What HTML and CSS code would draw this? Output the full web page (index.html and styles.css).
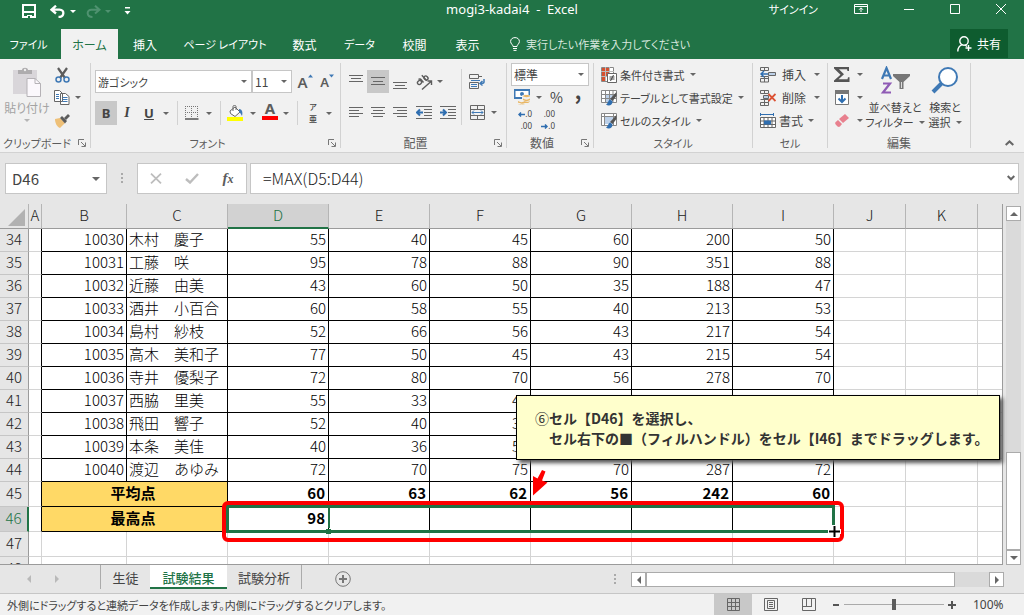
FILE: index.html
```html
<!DOCTYPE html>
<html lang="ja">
<head>
<meta charset="utf-8">
<title>mogi3-kadai4 - Excel</title>
<link rel="stylesheet" href="styles.css">
</head>
<body>
<div class="app">

<header class="titlebar">
  <div class="quick">
    <button class="q-save" aria-label="上書き保存"><svg width="14" height="14" viewBox="0 0 14 14" fill="none" stroke="#fff" stroke-width="2"><path d="M1 1h12v12H1zM1 8h12"/><path d="M5 14v-3h5v3" fill="#fff" stroke="none"/><path d="M6 12h2v2H6z" fill="#217346" stroke="none"/></svg></button>
    <button class="q-undo" aria-label="元に戻す"><svg width="15" height="13" viewBox="0 0 15 13" fill="none" stroke="#fff" stroke-width="2.300"><path d="M6 0.700L1.500 4.700 6 8.500M2 4.700h7.500c5.500 0 5 7.300-1 7.300"/></svg></button>
    <i class="caret white"></i>
    <button class="q-redo" aria-label="やり直し"><svg width="15" height="13" viewBox="0 0 15 13" fill="none" stroke="#4f9270" stroke-width="2"><path d="M9 0.700l4.500 4L9 8.500M13 4.700H5.500C0 4.700.5 12 6.500 12"/></svg></button>
    <i class="caret faded"></i>
    <button class="q-more" aria-label="カスタマイズ"><svg width="7" height="8" viewBox="0 0 7 8" fill="#fff"><path d="M1 0h5v1.500H1zM0.500 4h6l-3 3.500z"/></svg></button>
  </div>
  <h1 class="doc">mogi3-kadai4&nbsp; -&nbsp; Excel</h1>
  <div class="window">
    <button class="signin">サインイン</button>
    <button aria-label="リボンの表示オプション"><svg width="14" height="10" viewBox="0 0 14 10" fill="none" stroke="#fff"><path d="M.5.500h13v9H.5zM.5 2.500h13M7 8V4M5 5.800l2-2 2 2"/></svg></button>
    <button aria-label="最小化"><svg width="10" height="10" viewBox="0 0 10 10" stroke="#fff"><path d="M0 5.500h10"/></svg></button>
    <button aria-label="最大化"><svg width="10" height="10" viewBox="0 0 10 10" fill="none" stroke="#fff"><path d="M.5.500h9v9h-9z"/></svg></button>
    <button aria-label="閉じる"><svg width="10" height="10" viewBox="0 0 10 10" fill="none" stroke="#fff"><path d="M0 0l10 10M10 0L0 10"/></svg></button>
  </div>
</header>

<nav class="tabs">
  <button class="tab file kana">ファイル</button>
  <button class="tab home on">ホーム</button>
  <button class="tab insert">挿入</button>
  <button class="tab page kana">ページ レイアウト</button>
  <button class="tab formula">数式</button>
  <button class="tab data kana">データ</button>
  <button class="tab review">校閲</button>
  <button class="tab view">表示</button>
  <button class="tell kana"><svg width="10" height="14" viewBox="0 0 10 14" fill="none" stroke="#fff"><path d="M3 9.500c0-2-2.400-2.500-2.400-5C.6 2 2.600.6 5 .6s4.400 1.400 4.400 3.900c0 2.500-2.400 3-2.400 5zM3 11.500h4M3.500 13.400h3"/></svg>実行したい作業を入力してください</button>
  <button class="share"><svg width="15" height="16" viewBox="0 0 15 16" fill="none" stroke="#fff" stroke-width="1.400"><circle cx="7" cy="5" r="4.200"/><path d="M.8 15.500c0-4 2-6 4.700-6.800M8 9l2 1.500M11.500 9v6M8.500 12h6"/></svg>共有</button>
</nav>

<section class="ribbon">
  <div class="group g-clip">
    <div class="body">
      <button class="big paste">
        <svg width="30" height="30" viewBox="0 0 30 30"><path d="M1 3h24v24H1z" fill="#d9d6da"/><path d="M6 7V3h4c0-3 6-3 6 0h4v4z" fill="#aeacae"/><circle cx="13" cy="3" r="1.200" fill="#eee"/><path d="M15 11.500h8l5.500 5V29.500H15z" fill="#fbf8fc" stroke="#b5b2b6"/><path d="M23 11.500v5h5.500" fill="none" stroke="#b5b2b6"/></svg>
        <span>貼り付け</span><i class="caret light"></i>
      </button>
      <div class="clip-col">
        <button aria-label="切り取り"><svg width="15" height="16" viewBox="0 0 15 16" fill="none"><path d="M3 1l7 10M12 1L5 11" stroke="#5c5c5c" stroke-width="2.200"/><circle cx="3.500" cy="12.500" r="2.500" stroke="#3f79b5" stroke-width="1.500"/><circle cx="11.500" cy="12.500" r="2.500" stroke="#3f79b5" stroke-width="1.500"/></svg></button><i></i>
        <button aria-label="コピー"><svg width="16" height="15" viewBox="0 0 16 15" fill="#fff" stroke="#666"><path d="M.5.500h5l3 3v8h-8zM6.500 3.500h5l3.500 3v8H6.500z"/><path d="M2 4.500h3M2 6.500h3M2 8.500h3M8.500 7.500h5M8.500 9.500h5M8.500 11.500h5" stroke="#3f79b5"/></svg></button><i class="caret"></i>
        <button aria-label="書式のコピー"><svg width="16" height="14" viewBox="0 0 16 14"><path d="M1 5l5-1 5 5-5 5c-3-1-5-5-5-9z" fill="#eec078"/><path d="M6 4l2-2 5 5-2 2.500z" fill="#5c5c5c"/><path d="M10 4l4-4 2 2-4 4z" fill="#5c5c5c"/></svg></button><i></i>
      </div>
    </div>
    <footer><span>クリップボード</span><button class="launch" aria-label="クリップボードの設定"><svg width="8" height="8" viewBox="0 0 8 8" fill="none" stroke="#777"><path d="M.5 6V.5H6M3 3l4 4M7.500 3.500v4h-4"/></svg></button></footer>
  </div>

  <div class="group g-font">
    <div class="body stack">
      <div class="row f1">
        <span class="pick"><select class="kana" aria-label="フォント"><option>游ゴシック</option></select></span><span class="pick"><select aria-label="フォント サイズ"><option>11</option></select></span>
        <button aria-label="フォント サイズの拡大" class="grow">A<svg width="5" height="4" viewBox="0 0 5 4"><path d="M0 3.500h5L2.500.500z" fill="#3f79b5"/></svg></button>
        <button aria-label="フォント サイズの縮小" class="grow small">A<svg width="5" height="4" viewBox="0 0 5 4"><path d="M0 .500h5L2.500 3.500z" fill="#3f79b5"/></svg></button>
      </div>
      <div class="row f2">
        <button class="on bold">B</button><button class="ital">I</button><button class="under">U</button><i class="caret"></i><i class="sep"></i>
        <button aria-label="罫線"><svg width="14" height="14" viewBox="0 0 14 14" fill="none" stroke="#777"><path d="M.5 0v12M6.500 0v12M12.500 0v12M0 .5h13M0 6.500h13" stroke-dasharray="1 1"/><path d="M0 13h13.500" stroke="#555" stroke-width="1.500"/></svg></button><i class="caret"></i><i class="sep"></i>
        <button aria-label="塗りつぶしの色"><svg width="16" height="16" viewBox="0 0 16 16" fill="none"><path d="M3 6l5-4 5 5-5 4.500-4.500-3z" fill="#fff" stroke="#666"/><path d="M6 6V1.500c0-1.500 3-1.500 3 0V5" stroke="#666"/><path d="M12 4c3 0 4 3 3 7-1-1-1-3-3-4z" fill="#3f79b5"/><path d="M0 12h16v4H0z" fill="#ff0"/></svg></button><i class="caret"></i>
        <button class="fcolor" aria-label="フォントの色">A</button><i class="caret"></i><i class="sep"></i>
        <button class="ruby" aria-label="ふりがな"><span>ア</span><span>亜</span></button><i class="caret"></i>
      </div>
    </div>
    <footer><span>フォント</span><button class="launch" aria-label="フォントの設定"><svg width="8" height="8" viewBox="0 0 8 8" fill="none" stroke="#777"><path d="M.5 6V.5H6M3 3l4 4M7.500 3.500v4h-4"/></svg></button></footer>
  </div>

  <div class="group g-align">
    <div class="body">
      <div class="stack">
      <div class="row a1">
        <button aria-label="上揃え"><svg width="14" height="15" viewBox="0 0 14 15" stroke="#666"><path d="M0 1.500h14M2 4.500h10M0 7.500h14"/></svg></button>
        <button class="on" aria-label="上下中央揃え"><svg width="14" height="15" viewBox="0 0 14 15" stroke="#666"><path d="M0 3.500h14M2 7.500h10M0 10.500h14"/></svg></button>
        <button aria-label="下揃え"><svg width="14" height="15" viewBox="0 0 14 15" stroke="#666"><path d="M0 8.500h14M2 11.500h10M0 14.500h14"/></svg></button>
        <button aria-label="方向"><svg width="17" height="16" viewBox="0 0 17 16" fill="none" stroke="#5c5c5c" stroke-width="1.400"><ellipse cx="3.500" cy="8.500" rx="2.200" ry="1.800" transform="rotate(-45 3.500 8.500)"/><path d="M2.500 5.500c1-1 2-.5 2.700.3L7.500 8.500M5.800 1.200l5 5.500"/><ellipse cx="10" cy="4" rx="2.200" ry="1.800" transform="rotate(45 10 4)"/><path d="M6 15.500l9-8M11.500 7H15.500v4"/></svg></button><i class="caret"></i>
      </div>
      <div class="row a2">
        <button aria-label="左揃え"><svg width="14" height="13" viewBox="0 0 14 13" stroke="#666"><path d="M0 1.500h14M0 4.500h10M0 7.500h14M0 10.500h10"/></svg></button>
        <button aria-label="中央揃え"><svg width="14" height="13" viewBox="0 0 14 13" stroke="#666"><path d="M0 1.500h14M2 4.500h10M0 7.500h14M2 10.500h10"/></svg></button>
        <button aria-label="右揃え"><svg width="14" height="13" viewBox="0 0 14 13" stroke="#666"><path d="M0 1.500h14M4 4.500h10M0 7.500h14M4 10.500h10"/></svg></button>
        <button aria-label="インデントを減らす"><svg width="16" height="13" viewBox="0 0 16 13" fill="none" stroke="#666"><path d="M0 .500h16M8 3.500h8M8 6.500h8M8 9.500h8M0 12.500h16"/><path d="M7 6.500H1M4 3.500l-3 3 3 3" stroke="#2f6eb0" stroke-width="2"/></svg></button>
        <button aria-label="インデントを増やす"><svg width="16" height="13" viewBox="0 0 16 13" fill="none" stroke="#666"><path d="M0 .500h16M8 3.500h8M8 6.500h8M8 9.500h8M0 12.500h16"/><path d="M0 6.500h6M3 3.500l3 3-3 3" stroke="#2f6eb0" stroke-width="2"/></svg></button>
      </div>
      </div>
      <i class="sep tall"></i>
      <div class="stack">
      <div class="row a3"><button aria-label="折り返して全体を表示する"><svg width="16" height="15" viewBox="0 0 16 15" fill="none" stroke="#666"><path d="M.5.500h9v4h-9zM.5 8.500h9v6h-9zM9 2.500h4"/><path d="M2 10.500h6M2 12.500h6M2 6.500h9" stroke="#3f79b5"/><path d="M15 5v3c0 1-1 1.500-3 1.500M13.500 7l-2.500 2.500 2.500 2" stroke="#3f79b5" stroke-width="1.500"/></svg></button></div>
      <div class="row a3"><button aria-label="セルを結合して中央揃え"><svg width="15" height="15" viewBox="0 0 15 15" fill="none" stroke="#666"><path d="M.5.500h14v14H.5zM.5 4.500h14M.5 10.500h14M7.500 0v4M7.500 11v4"/><path d="M2 7.500h11M4 5.500l-2 2 2 2M11 5.500l2 2-2 2" stroke="#3f79b5"/></svg></button><i class="caret"></i></div>
      </div>
    </div>
    <footer><span class="kanji">配置</span><button class="launch" aria-label="配置の設定"><svg width="8" height="8" viewBox="0 0 8 8" fill="none" stroke="#777"><path d="M.5 6V.5H6M3 3l4 4M7.500 3.500v4h-4"/></svg></button></footer>
  </div>

  <div class="group g-num">
    <div class="body">
      <span class="pick"><select aria-label="表示形式"><option>標準</option></select></span>
      <div class="row n1">
        <button aria-label="通貨"><svg width="16" height="16" viewBox="0 0 16 16"><path d="M.5 1h15v8H.5z" fill="#fff" stroke="#3f79b5" stroke-width="2"/><circle cx="8" cy="5" r="2" fill="#3f79b5"/><path d="M8 7c0-2 8-2 8 0v6c0 2-5 2-5 1 0 2-8 2-8 0v-2c0-2 5-2 5-1z" fill="#f0f0f0"/><path d="M9 7c0-1.500 7-1.500 7 0s-7 1.500-7 0zM9 9.500c2 1.500 5 1.500 7 0v1.500c-2 1.500-5 1.500-7 0zM4 12c2 1.500 5 1.500 7 0 1 1.200 4 1 5 0-1 2.500-3 2-5 2-2 1-5 1-7-.5zM4 15c2 1 5 1 7 0-1 1.500-6 1.500-7 0z" fill="#e9b765"/></svg></button><i class="caret"></i>
        <button class="pct">%</button><button class="comma">,</button>
      </div>
      <div class="row n2">
        <button class="dec" aria-label="小数点以下の表示桁数を増やす"><span><svg width="7" height="5" viewBox="0 0 7 5" fill="none" stroke="#2f6eb0" stroke-width="1.500"><path d="M7 2.500H1M3 .500l-2 2 2 2"/></svg>.0</span><span>.00</span></button>
        <button class="dec" aria-label="小数点以下の表示桁数を減らす"><span>.00</span><span><svg width="7" height="5" viewBox="0 0 7 5" fill="none" stroke="#2f6eb0" stroke-width="1.500"><path d="M0 2.500h6M4 .500l2 2-2 2"/></svg>.0</span></button>
      </div>
    </div>
    <footer><span class="kanji">数値</span><button class="launch" aria-label="数値の設定"><svg width="8" height="8" viewBox="0 0 8 8" fill="none" stroke="#777"><path d="M.5 6V.5H6M3 3l4 4M7.500 3.500v4h-4"/></svg></button></footer>
  </div>

  <div class="group g-style">
    <div class="body list kana">
      <button class="item"><svg width="16" height="16" viewBox="0 0 16 16" fill="none"><path d="M.5.500h12v14H.5z" fill="#fff" stroke="#888"/><path d="M1 1h3v4H1zM4 1h5v4H4zM1 5h7v4H1zM1 10h3v4H1z" fill="#d6502f"/><path d="M4.500 0v14M8.500 0v6M0 4.500h13M0 9.500h7" stroke="#bbb"/><path d="M6.500 6.500h9v9h-9z" fill="#fff" stroke="#666"/><path d="M8.500 10h5M8.500 12h5M12.500 8l-3 6" stroke="#444"/></svg>条件付き書式<i class="caret"></i></button>
      <button class="item"><svg width="16" height="16" viewBox="0 0 16 16" fill="none"><path d="M.5.500h15v12H.5z" fill="#fff"/><path d="M4 4h8v8H4z" fill="#bcd0e8"/><path d="M.5.500h15v12H.5zM4.500 0v13M8.500 0v13M12 0v13M0 4.500h16M0 8.500h16" stroke="#888"/><path d="M15.500 2v4l-4 5-2.500-2z" fill="#555"/><path d="M5 14.500c2-1 2-4 4-5l2.500 2c0 4-4 5-6.500 3z" fill="#2f6eb0"/></svg>テーブルとして書式設定<i class="caret"></i></button>
      <button class="item"><svg width="16" height="16" viewBox="0 0 16 16" fill="none"><path d="M.5.500h15v12H.5z" fill="#fff"/><path d="M4 4h9v7H4z" fill="#bcd0e8"/><path d="M.5.500h15v12H.5zM3.500 0v13M0 3.500h16M12.500 0v13" stroke="#888"/><path d="M15.500 2v4l-4 5-2.500-2z" fill="#555"/><path d="M5 14.500c2-1 2-4 4-5l2.500 2c0 4-4 5-6.500 3z" fill="#2f6eb0"/></svg>セルのスタイル<i class="caret"></i></button>
    </div>
    <footer><span>スタイル</span></footer>
  </div>

  <div class="group g-cell">
    <div class="body list">
      <button class="item"><svg width="16" height="16" viewBox="0 0 16 16" fill="none" stroke="#666"><path d="M.5.500h8v3h-8zM4.500.500v3M.5 11.500h8v3.500h-8zM4.500 9v6M.5 9.500h8v3"/><path d="M8.500 5.500h7v3h-7z" fill="#bcd0e8"/><path d="M8 7H1M4 4L1 7l3 3" stroke="#2f6eb0" stroke-width="1.500"/></svg><span>挿入</span><i class="caret"></i></button>
      <button class="item"><svg width="16" height="16" viewBox="0 0 16 16" fill="none" stroke="#666"><path d="M.5.500h8v3h-8zM4.500.500v3M.5 12.500h8v3h-8zM4.500 10v5M.5 9.500h8v3"/><path d="M3.500 5.500h5v3h-5z" fill="#bcd0e8"/><path d="M8.500 4l7 7M15.500 4l-7 7" stroke="#dc5133" stroke-width="1.800"/></svg><span>削除</span><i class="caret"></i></button>
      <button class="item"><svg width="16" height="16" viewBox="0 0 16 16" fill="none" stroke="#666"><path d="M.5 4.500h15v10H.5z" fill="#fff"/><path d="M.5 8h15M.5 11.500h15M4 4.500v10M12 4.500v10M8 4.500v10"/><path d="M4 7.500h7v4H4z" fill="#2f6eb0" stroke="none"/><path d="M.5 0v3M13.500 0v3M1 1.500h12" stroke="#2f6eb0"/></svg>書式<i class="caret"></i></button>
    </div>
    <footer><span>セル</span></footer>
  </div>

  <div class="group g-edit">
    <div class="body kana">
      <div class="edit-col">
        <button aria-label="合計"><svg width="16" height="15" viewBox="0 0 16 15"><path d="M0 0h15v4h-1.500L13 2.300H5l5 5-5.500 5h9l.5-2h1.500V15H0v-1.500L6.500 7.700 0 1.500z" fill="#555"/></svg></button><i class="caret"></i>
        <button aria-label="フィル"><svg width="14" height="15" viewBox="0 0 14 15" fill="none"><path d="M.5.500h13v14H.5z" fill="#fff" stroke="#777"/><path d="M0 0h14v4H0z" fill="#777"/><path d="M7 5v7M3.500 8.500L7 12l3.500-3.500" stroke="#2f6eb0" stroke-width="2"/></svg></button><i class="caret"></i>
        <button aria-label="クリア"><svg width="14" height="13" viewBox="0 0 14 13"><path d="M4 5l6-5 4 4-6 5z" fill="#e8808e"/><path d="M3 6l4 4-2 2.500c-1 .7-1.500.500-2.500 0L.7 10.500c-.7-1-.7-1.700 0-2.500z" fill="#e8808e"/></svg></button><i class="caret"></i>
      </div>
      <button class="big sort"><svg width="31" height="30" viewBox="0 0 31 30" fill="none"><path d="M2 13L6.500 2l4.500 11M3.500 9.500h6" stroke="#3f79b5" stroke-width="2.200"/><path d="M3 17.500h7L3 26.500h8" stroke="#8f5bb5" stroke-width="2.200"/><path d="M13 8h17v2l-6.500 6v7h-4v-7L13 10z" fill="#777"/><path d="M21.500 16v6" stroke="#ddd"/></svg><span>並べ替えと</span><span>フィルター<i class="caret"></i></span></button>
      <button class="big find"><svg width="28" height="30" viewBox="0 0 28 30" fill="none"><circle cx="17" cy="11" r="9" fill="#fff" stroke="#3f79b5" stroke-width="2"/><path d="M10.500 17.500L2 26" stroke="#3f79b5" stroke-width="4"/></svg><span>検索と</span><span>選択<i class="caret"></i></span></button>
    </div>
    <footer><span class="kanji">編集</span></footer>
  </div>
  <button class="collapse" aria-label="リボンを折りたたむ"><svg width="9" height="6" viewBox="0 0 9 6" fill="none" stroke="#666" stroke-width="2"><path d="M.7 5l3.800-3.600L8.300 5"/></svg></button>
</section>

<section class="formula-bar">
  <label class="namebox"><input value="D46" aria-label="名前ボックス"><i class="caret wide"></i></label>
  <i class="dots"></i>
  <div class="fx">
    <button aria-label="キャンセル"><svg width="12" height="11" viewBox="0 0 12 11" stroke="#bdbdbd" stroke-width="1.800"><path d="M1 .7l10 9.600M11 .7L1 10.300"/></svg></button>
    <button aria-label="入力"><svg width="14" height="11" viewBox="0 0 14 11" fill="none" stroke="#bdbdbd" stroke-width="2.400"><path d="M1 6l4 3.500L13 1"/></svg></button>
    <button class="fn" aria-label="関数の挿入">f<small>x</small></button>
  </div>
  <label class="formula-box"><input value="=MAX(D5:D44)" aria-label="数式バー"><svg width="8" height="6" viewBox="0 0 8 6" fill="none" stroke="#666" stroke-width="2"><path d="M.7 1L4 4.300 7.300 1"/></svg></label>
</section>

<main class="sheet">
  <div class="grid">
  <table>
    <colgroup><col class="c-h"><col class="c-a"><col class="c-b"><col class="c-n"><col class="c-n"><col class="c-n"><col class="c-n"><col class="c-n"><col class="c-n"><col class="c-n"><col class="c-j"><col class="c-j"><col></colgroup>
    <thead><tr><th class="corner"><svg width="17" height="17" viewBox="0 0 17 17"><path d="M17 0v17H0z" fill="#b1b1b1"/></svg></th><th>A</th><th>B</th><th>C</th><th class="sel">D</th><th>E</th><th>F</th><th>G</th><th>H</th><th>I</th><th>J</th><th>K</th><th></th></tr></thead>
    <tbody>
    <tr><th>34</th><td class="edge"></td><td class="k">10030</td><td class="k nm">木村　慶子</td><td class="k">55</td><td class="k">40</td><td class="k">45</td><td class="k">60</td><td class="k">200</td><td class="k">50</td><td></td><td></td><td></td></tr>
    <tr><th>35</th><td class="edge"></td><td class="k">10031</td><td class="k nm">工藤　咲</td><td class="k">95</td><td class="k">78</td><td class="k">88</td><td class="k">90</td><td class="k">351</td><td class="k">88</td><td></td><td></td><td></td></tr>
    <tr><th>36</th><td class="edge"></td><td class="k">10032</td><td class="k nm">近藤　由美</td><td class="k">43</td><td class="k">60</td><td class="k">50</td><td class="k">35</td><td class="k">188</td><td class="k">47</td><td></td><td></td><td></td></tr>
    <tr><th>37</th><td class="edge"></td><td class="k">10033</td><td class="k nm">酒井　小百合</td><td class="k">60</td><td class="k">58</td><td class="k">55</td><td class="k">40</td><td class="k">213</td><td class="k">53</td><td></td><td></td><td></td></tr>
    <tr><th>38</th><td class="edge"></td><td class="k">10034</td><td class="k nm">島村　紗枝</td><td class="k">52</td><td class="k">66</td><td class="k">56</td><td class="k">43</td><td class="k">217</td><td class="k">54</td><td></td><td></td><td></td></tr>
    <tr><th>39</th><td class="edge"></td><td class="k">10035</td><td class="k nm">高木　美和子</td><td class="k">77</td><td class="k">50</td><td class="k">45</td><td class="k">43</td><td class="k">215</td><td class="k">54</td><td></td><td></td><td></td></tr>
    <tr><th>40</th><td class="edge"></td><td class="k">10036</td><td class="k nm">寺井　優梨子</td><td class="k">72</td><td class="k">80</td><td class="k">70</td><td class="k">56</td><td class="k">278</td><td class="k">70</td><td></td><td></td><td></td></tr>
    <tr><th>41</th><td class="edge"></td><td class="k">10037</td><td class="k nm">西脇　里美</td><td class="k">55</td><td class="k">33</td><td class="k">45</td><td class="k"></td><td class="k"></td><td class="k"></td><td></td><td></td><td></td></tr>
    <tr><th>42</th><td class="edge"></td><td class="k">10038</td><td class="k nm">飛田　響子</td><td class="k">52</td><td class="k">40</td><td class="k">38</td><td class="k"></td><td class="k"></td><td class="k"></td><td></td><td></td><td></td></tr>
    <tr><th>43</th><td class="edge"></td><td class="k">10039</td><td class="k nm">本条　美佳</td><td class="k">40</td><td class="k">36</td><td class="k">55</td><td class="k"></td><td class="k"></td><td class="k"></td><td></td><td></td><td></td></tr>
    <tr><th>44</th><td class="edge"></td><td class="k">10040</td><td class="k nm">渡辺　あゆみ</td><td class="k">72</td><td class="k">70</td><td class="k">75</td><td class="k">70</td><td class="k">287</td><td class="k">72</td><td></td><td></td><td></td></tr>
    <tr class="sum"><th>45</th><td class="edge"></td><td class="k total" colspan="2">平均点</td><td class="k">60</td><td class="k">63</td><td class="k">62</td><td class="k">56</td><td class="k">242</td><td class="k">60</td><td></td><td></td><td></td></tr>
    <tr class="sum"><th class="sel">46</th><td class="edge"></td><td class="k total" colspan="2">最高点</td><td class="k">98</td><td class="k"></td><td class="k"></td><td class="k"></td><td class="k"></td><td class="k"></td><td></td><td></td><td></td></tr>
    <tr class="sum"><th>47</th><td></td><td></td><td></td><td></td><td></td><td></td><td></td><td></td><td></td><td></td><td></td><td></td></tr>
    <tr class="sum"><th>48</th><td></td><td></td><td></td><td></td><td></td><td></td><td></td><td></td><td></td><td></td><td></td><td></td></tr>
    </tbody>
  </table>
  </div>
  <div class="vscroll">
    <button aria-label="上へスクロール"><i class="tri up"></i></button>
    <div class="track"><div class="thumb"></div></div>
    <button aria-label="下へスクロール"><i class="tri down"></i></button>
  </div>
  <div class="range"></div>
  <div class="active-edge"></div>
  <div class="handle"></div>
  <div class="frame"></div>
  <svg class="cross" width="13" height="13" viewBox="0 0 13 13"><path d="M4 0h5v4h4v5H9v4H4V9H0V4h4z" fill="#fff"/><path d="M5.500 1h2v4.500H12v2H7.500V12h-2V7.500H1v-2h4.500z" fill="#000"/></svg>
  <svg class="arrow" width="16" height="26" viewBox="0 0 16 26"><path d="M10 0l3.500 1.500-3.500 9 5.500 2L1 25.500 1 6l4.500 2.500z" fill="#f00"/></svg>
  <aside class="callout"><p><span class="num">⑥</span>セル【D46】を選択し、</p><p>　セル右下の■（フィルハンドル）をセル【I46】までドラッグします。</p></aside>
</main>

<nav class="sheetbar">
  <div class="arrows"><button aria-label="前のシート"><i class="tri left dim"></i></button><button aria-label="次のシート"><i class="tri right dim"></i></button></div>
  <button class="stab first">生徒</button>
  <button class="stab on">試験結果</button>
  <button class="stab last">試験分析</button>
  <button class="add" aria-label="新しいシート"><svg width="16" height="16" viewBox="0 0 16 16" fill="none" stroke="#777"><circle cx="8" cy="8" r="7.300"/><path d="M8 4v8M4 8h8" stroke-width="2"/></svg></button>
  <i class="dots"></i>
  <div class="hscroll">
    <button aria-label="左へスクロール"><i class="tri left"></i></button>
    <div class="track"><div class="thumb"></div></div>
    <button aria-label="右へスクロール"><i class="tri right"></i></button>
  </div>
</nav>

<footer class="status">
  <span class="msg kana">外側にドラッグすると連続データを作成します。内側にドラッグするとクリアします。</span>
  <button class="vw on" aria-label="標準"><svg width="13" height="13" viewBox="0 0 13 13" fill="none" stroke="#666"><path d="M.5.500h12v12H.5zM4.500 0v13M8.500 0v13M0 4.500h13M0 8.500h13"/></svg></button>
  <button class="vw" aria-label="ページ レイアウト"><svg width="14" height="13" viewBox="0 0 14 13" fill="none" stroke="#666"><path d="M.5.500h13v12H.5zM3.500 2.500h7v8h-7zM5 4.500h4M5 6.500h4M5 8.500h4"/></svg></button>
  <button class="vw" aria-label="改ページ プレビュー"><svg width="14" height="13" viewBox="0 0 14 13" fill="none" stroke="#666"><path d="M.5.500h13v12H.5zM4.500 0v8M9.500 0v8M0 8.500h10"/></svg></button>
  <button class="zm" aria-label="縮小"><svg width="6" height="6" viewBox="0 0 6 6"><path d="M0 2h6v2H0z" fill="#555"/></svg></button>
  <input class="zoom" type="range" min="0" max="100" value="50" aria-label="ズーム">
  <button class="zm" aria-label="拡大"><svg width="8" height="8" viewBox="0 0 8 8"><path d="M3 0h2v3h3v2H5v3H3V5H0V3h3z" fill="#555"/></svg></button>
  <span class="pc">100%</span>
</footer>

</div>
</body>
</html>
```
FILE: styles.css
```css
* { box-sizing: border-box; }
body { margin: 0; font-family: "Noto Sans CJK JP", sans-serif; font-size: 12px; color: #444; }
button, input, select { font: inherit; color: inherit; border: 0; padding: 0; margin: 0; background: none; border-radius: 0; }
button { display: flex; align-items: center; justify-content: center; white-space: nowrap; }
svg { display: block; flex: none; }
p, h1 { margin: 0; }

.app { display: flex; flex-direction: column; height: 100vh; overflow: hidden; background: #e6e6e6; font-feature-settings: "palt"; }
.kana { font-size: 11px; }

.caret { flex: none; width: 6px; height: 3px; border: 3px solid transparent; border-top-color: #666; border-bottom: 0; justify-self: center; align-self: center; }
.caret.white { border-top-color: #fff; }
.caret.faded { border-top-color: #4f9270; }
.caret.light { border-top-color: #b5b5b5; }
.caret.wide { width: 8px; height: 4px; border-width: 4px 4px 0; }
.tri { width: 0; height: 0; border: 4px solid transparent; }
.tri.up { border-top: 0; border-bottom-color: #666; }
.tri.down { border-bottom: 0; border-top-color: #666; }
.tri.left { border-left: 0; border-right-color: #666; }
.tri.right { border-right: 0; border-left-color: #666; }
.tri.left.dim { border-right-color: #b9b9b9; }
.tri.right.dim { border-left-color: #b9b9b9; }

/* title bar */
.titlebar { flex: none; display: grid; grid-template-columns: 1fr auto 1fr; height: 29px; background: #217346; color: #fff; }
.quick { display: flex; align-items: center; padding: 0 0 7px 22px; }
.q-undo { margin: 0 5px 0 14px; }
.q-redo { margin: 0 4px 0 10px; }
.q-more { margin-left: 13px; }
.doc { font-size: 13px; font-weight: 400; line-height: 19px; font-family: "Noto Sans", sans-serif; }
.window { display: flex; align-items: center; justify-content: flex-end; height: 18px; padding-right: 18px; gap: 36px; }
.signin { font-size: 11px; }

/* ribbon tabs */
.tabs { flex: none; display: flex; height: 30px; background: #217346; color: #fff; }
.tab.file { width: 61px; padding-right: 4px; }
.tab.home { width: 57px; }
.tab.on { background: #f1f1f1; color: #217346; }
.tab.insert { width: 54px; }
.tab.page { width: 106px; }
.tab.formula { width: 53px; }
.tab.data { width: 57px; }
.tab.review { width: 53px; }
.tab.view { width: 53px; }
.tell { gap: 6px; padding-left: 16px; color: #d9e8df; }
.share { gap: 5px; width: 58px; margin: 0 16px 1px auto; background: #0e5c2f; }

/* ribbon */
.ribbon { flex: none; display: flex; height: 94px; padding: 4px 0; background: #f1f1f1; border-bottom: 1px solid #d2d2d2; }
.group { flex: none; display: flex; flex-direction: column; border-right: 1px solid #d2d2d2; }
.body { flex: 1; display: flex; }
.group footer { display: flex; justify-content: center; align-items: center; height: 10px; line-height: 10px; font-size: 11px; color: #5c5c5c; }
.group footer span { flex: 1; text-align: center; white-space: nowrap; }
.group footer .kanji { font-size: 12px; }
.launch { width: 16px; height: 10px; }
.g-clip { width: 91px; }
.g-font { width: 250px; }
.g-align { width: 166px; }
.g-num { width: 87px; }
.g-style { width: 159px; }
.g-cell { width: 75px; }
.g-edit { width: 143px; }
.big { flex-direction: column; justify-content: flex-start; line-height: 15px; }
.big span { display: flex; gap: 5px; }
.paste { width: 54px; padding-top: 4px; color: #a3a3a3; }
.paste svg { margin-bottom: 3px; }
.paste .caret { margin-top: 4px; }
.clip-col { display: grid; grid-template: repeat(3, 23px) / 16px 16px; height: 69px; }
.stack { display: flex; flex-direction: column; gap: 8px; padding-top: 7px; }
.row { display: grid; height: 23px; }
.row.f1 { display: flex; padding-left: 4px; }
.row.f2 { grid-template-columns: 22px 20px 24px 10px 12px 18px 16px 6px 24px 11px 24px 8px 14px 18px 14px; padding-left: 4px; }
.on { background: #c8c8c8; }
.sep { width: 1px; background: #d2d2d2; justify-self: center; }
.pick { position: relative; display: block; }
.pick select { appearance: none; width: 100%; height: 23px; padding: 0 4px 0 2px; background: #fff; border: 1px solid #c6c6c6; }
.pick::after { content: ""; position: absolute; right: 5px; top: 10px; border: 3px solid transparent; border-top-color: #666; border-bottom: 0; pointer-events: none; }
.f1 .pick:first-child { width: 157px; }
.f1 .pick:nth-child(2) { width: 40px; margin-right: 2px; }
.grow { width: 22px; font: 600 15px "Noto Sans", sans-serif; color: #5c5c5c; align-items: center; }
.grow svg { align-self: flex-start; margin-top: 4px; }
.grow.small { font-size: 13px; }
.bold { font: 700 13px "Noto Sans", sans-serif; }
.ital { font: italic 700 14px "Liberation Serif", serif; }
.under { font: 700 13px "Noto Sans", sans-serif; text-decoration: underline; }
.fcolor { width: 16px; height: 19px; justify-self: center; border-bottom: 4px solid #f00; font: 700 15px/15px "Noto Sans", sans-serif; color: #5c5c5c; }
.ruby { flex-direction: column; font-size: 8px; line-height: 12px; font-weight: 500; }
.g-align .body { padding-left: 4px; }
.row.a1, .row.a2 { grid-template-columns: 22px 22px 22px 26px 22px; }
.a1 .caret { justify-self: start; }
.row.a3 { grid-template-columns: 26px 8px; }
.sep.tall { height: 56px; margin: 6px 2px 0; }
.g-num .body { flex-direction: column; padding: 0 4px; }
.row.n1 { grid-template-columns: 22px 12px 23px 20px; height: 22px; }
.row.n2 { grid-template-columns: 21px 23px; height: 24px; }
.pct { font-size: 14px; }
.comma { font-size: 20px; font-weight: 700; line-height: 8px; padding-bottom: 12px; }
.dec { flex-direction: column; align-items: flex-end; font: 8px/12px "Noto Sans", sans-serif; }
.dec span { display: flex; align-items: center; }
.body.list { flex-direction: column; }
.item { height: 23px; justify-content: flex-start; padding-left: 7px; gap: 3px; }
.item .caret { margin-left: 2px; }
.g-cell .item span { width: 30px; }
.edit-col { display: grid; grid-template: repeat(3, 23px) / 28px 8px; height: 69px; }
.sort { width: 62px; padding-top: 3px; }
.find { width: 38px; padding-top: 3px; }
.sort svg, .find svg { margin-bottom: 4px; }
.collapse { margin: 0 10px 0 auto; align-self: flex-end; height: 10px; }

/* formula bar */
.formula-bar { flex: none; display: flex; height: 51px; padding: 10px 5px; }
.namebox { display: flex; align-items: center; width: 102px; padding: 0 6px; background: #fff; border: 1px solid #c6c6c6; }
.namebox input { flex: 1; width: 0; font: 15px "Noto Sans CJK JP", sans-serif; }
.dots { width: 2px; height: 11px; align-self: center; background: repeating-linear-gradient(#aaa 0 2px, transparent 2px 4px); margin: 0 14px; }
.fx { display: grid; grid-template-columns: repeat(3, 1fr); width: 110px; background: #fff; border: 1px solid #c6c6c6; }
.fn { font: italic 700 15px "Liberation Serif", serif; color: #5c5c5c; }
.fn small { font-size: 12px; padding-top: 2px; }
.formula-box { flex: 1; display: flex; align-items: center; margin-left: 3px; padding: 0 3px 2px 12px; background: #fff; border: 1px solid #c6c6c6; }
.formula-box input { flex: 1; font: 300 16px "Noto Sans CJK JP", sans-serif; color: #222; }

/* worksheet */
.sheet { flex: 1; min-height: 0; display: flex; position: relative; font-size: 15px; font-feature-settings: normal; }
.grid { flex: 1; overflow: hidden; border-bottom: 1px solid #9b9b9b; border-right: 1px solid #9b9b9b; }
table { width: 100%; table-layout: fixed; border-spacing: 0; color: #000; line-height: 20px; }
.c-h { width: 29px; }
.c-a { width: 13px; }
.c-b { width: 85px; }
.c-n { width: 101px; }
.c-j { width: 72px; }
th, td { padding: 0 0 2px; height: 23px; border-right: 1px solid #d4d4d4; border-bottom: 1px solid #d4d4d4; white-space: nowrap; }
td { background: #fff; text-align: right; font-weight: 300; }
th { background: #e6e6e6; font-weight: 300; color: #222; border-right-color: #9b9b9b; border-bottom-color: #c6c6c6; }
thead th { height: 25px; border-right-color: #b5b5b5; border-bottom-color: #9b9b9b; }
td:last-child, th:last-child { border-right: 0; }
thead .sel { background: #d2d2d2; border-bottom: 2px solid #217346; color: #217346; }
tbody .sel { background: #d2d2d2; border-right: 2px solid #217346; color: #217346; }
.corner svg { margin: 4px 0 0 8px; }
td.edge { border-right-color: #000; }
td.k { border-color: #000; padding-right: 2px; }
td.nm { text-align: left; padding-left: 2px; padding-right: 0; }
.sum td, .sum th { height: 25px; line-height: 22px; }
.sum td.k { font-weight: 700; padding-right: 3px; }
.sum td.total { background: #ffd966; text-align: center; }

.vscroll { flex: none; display: flex; flex-direction: column; width: 21px; padding: 2px 3px 0; }
.vscroll button { height: 15px; background: #fff; border: 1px solid #ababab; }
.vscroll .track { flex: 1; display: flex; flex-direction: column; justify-content: flex-end; background: #dadada; }
.vscroll .thumb { height: 98px; background: #fff; border: 1px solid #ababab; }

.range { position: absolute; left: 226px; top: 301px; width: 609px; height: 28px; border: 3px solid #217346; }
.active-edge { position: absolute; left: 328px; top: 304px; width: 2px; height: 20px; background: #217346; }
.handle { position: absolute; left: 326px; top: 325px; width: 5px; height: 5px; background: #217346; }
.frame { position: absolute; left: 222px; top: 297px; width: 622px; height: 41px; border: 4px solid #f00; border-radius: 6px; }
.cross { position: absolute; left: 828px; top: 321px; }
.arrow { position: absolute; left: 532px; top: 266px; }
.callout { position: absolute; left: 516px; top: 191px; padding: 12px 11px 11px 18px; background: #ffc; border: 1px solid #000; box-shadow: 3px 3px 4px #555; font-size: 14px; font-weight: 700; line-height: 20px; color: #333; white-space: nowrap; }
.num { font-weight: 400; }

/* sheet tabs */
.sheetbar { flex: none; display: flex; height: 28px; font-size: 13px; }
.arrows { display: flex; width: 100px; padding-left: 27px; gap: 24px; }
.stab { height: 24px; }
.stab.first { width: 50px; border-left: 1px solid #ababab; }
.stab.on { width: 77px; background: #fff; color: #217346; border-bottom: 2px solid #217346; font-weight: 500; padding-top: 2px; }
.stab.last { width: 75px; border-right: 1px solid #ababab; }
.add { margin: 0 auto 0 33px; }
.hscroll { display: flex; width: 373px; height: 15px; margin: 7px 20px 0 1px; }
.hscroll button { width: 15px; background: #fff; border: 1px solid #ababab; }
.hscroll .track { flex: 1; background: #dadada; }
.hscroll .thumb { width: 90%; height: 15px; background: #fff; border: 1px solid #ababab; }

/* status bar */
.status { flex: none; display: flex; align-items: center; height: 22px; background: #f1f1f1; border-top: 1px solid #c6c6c6; }
.msg { flex: 1; padding-left: 7px; }
.vw { width: 38px; height: 21px; }
.zm { width: 16px; }
.zoom { appearance: none; width: 100px; height: 11px; background: linear-gradient(#aaa, #aaa) center / 100% 1px no-repeat; }
.zoom::-webkit-slider-thumb { appearance: none; width: 4px; height: 11px; background: #5c5c5c; }
.pc { width: 64px; padding-left: 13px; font: 12px "Noto Sans", sans-serif; }
```
